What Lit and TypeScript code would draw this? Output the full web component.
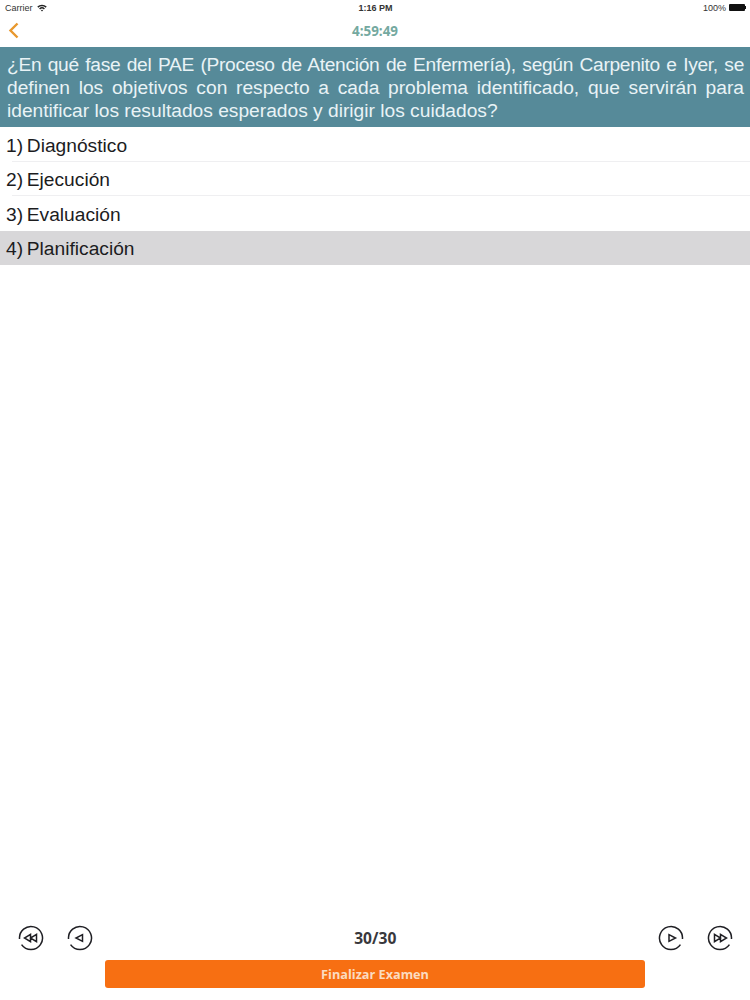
import { LitElement, html, css, svg } from "lit";
import { customElement } from "lit/decorators.js";

const ring = (gapLeft: boolean) =>
  gapLeft
    ? svg`<path d="M1.54 14 A11.5 11.5 0 1 1 3.58 19.6" />`
    : svg`<path d="M24.46 14 A11.5 11.5 0 1 0 22.42 19.6" />`;

@customElement("app-root")
export class AppRoot extends LitElement {
  static styles = css`
    :host {
      display: flex;
      flex-direction: column;
      height: 1000px;
      width: 750px;
      background: #fff;
      font-family: "Liberation Sans", Arial, sans-serif;
      color: #1c1c1e;
      overflow: hidden;
    }
    .status {
      height: 15px;
      display: grid;
      grid-template-columns: 1fr auto 1fr;
      align-items: center;
      padding: 0 4px 0 5px;
      font-size: 9px;
      color: #333;
    }
    .status .left { display: flex; align-items: center; gap: 4px; }
    .status .time { font-weight: 700; font-size: 9px; }
    .status .right { display: flex; justify-content: flex-end; align-items: center; gap: 3px; }
    .batt { display: flex; align-items: center; }
    .batt i { display: block; width: 16px; height: 7px; background: #111; border-radius: 1px; }
    .batt b { display: block; width: 1px; height: 3px; background: #111; }
    .nav {
      height: 31px;
      display: grid;
      grid-template-columns: 1fr auto 1fr;
      align-items: center;
      padding: 0 8px;
    }
    .timer {
      font-family: "Open Sans", "Noto Sans", sans-serif;
      font-weight: 700;
      font-size: 13.4px;
      color: #74a9a0;
    }
    .q {
      margin-top: 1px;
      background: #568a99;
      color: #e9f3f6;
      font-size: 19.2px;
      line-height: 23px;
      height: 80px;
      box-sizing: border-box;
      padding: 5.5px 6px 0 7px;
      text-align: justify;
    }
    .tight { letter-spacing: -0.32px; }
    .row {
      height: 34.5px;
      box-sizing: border-box;
      display: flex;
      align-items: center;
      padding: 3px 0 0 6px;
      font-size: 19.2px;
      word-spacing: -1.6px;
      color: #1c1c1e;
      position: relative;
    }
    .row.line::after {
      content: "";
      position: absolute;
      left: 12px;
      right: 0;
      bottom: 0;
      height: 1px;
      background: #efeff1;
    }
    .row.sel { background: #d8d7d9; }
    .spacer { flex: 1; }
    .pager {
      height: 26px;
      display: grid;
      grid-template-columns: 1fr auto 1fr;
      align-items: center;
      padding: 0 17.5px 0 18px;
      margin-bottom: 9px;
    }
    .group { display: flex; gap: 23px; }
    .group.end { justify-content: flex-end; }
    .count {
      font-family: "Open Sans", "Noto Sans", sans-serif;
      font-weight: 700;
      font-size: 15.6px;
      color: #38383c;
    }
    svg.ic { display: block; width: 26px; height: 26px; fill: none; stroke: #1f1f24; stroke-width: 1.5; }
    .foot { display: flex; justify-content: center; padding-bottom: 12px; }
    .finish {
      width: 540px;
      height: 28px;
      background: #f76f12;
      border-radius: 3px;
      border: 0;
      padding: 0;
      color: #fbdcc0;
      font-family: "Open Sans", "Noto Sans", sans-serif;
      font-weight: 700;
      font-size: 12.7px;
      display: flex;
      align-items: center;
      justify-content: center;
    }
  `;

  render() {
    return html`
      <div class="status">
        <div class="left">
          <span>Carrier</span>
          <svg width="10" height="8" viewBox="0 0 10 8">
            <path d="M0.3 2.6 A6.8 6.8 0 0 1 9.7 2.6 L8.7 3.7 A5.4 5.4 0 0 0 1.3 3.7 Z" fill="#222" />
            <path d="M2.1 4.4 A4.2 4.2 0 0 1 7.9 4.4 L6.9 5.4 A2.8 2.8 0 0 0 3.1 5.4 Z" fill="#222" />
            <path d="M3.9 6.2 A1.6 1.6 0 0 1 6.1 6.2 L5 7.6 Z" fill="#222" />
          </svg>
        </div>
        <div class="time">1:16 PM</div>
        <div class="right">
          <span>100%</span>
          <span class="batt"><i></i><b></b></span>
        </div>
      </div>
      <div class="nav">
        <svg width="11" height="17" viewBox="0 0 11 17" fill="none" stroke="#e8982e" stroke-width="2.4">
          <path d="M9.5 1.5 L2.5 8.5 L9.5 15.5" />
        </svg>
        <div class="timer">4:59:49</div>
        <div></div>
      </div>
      <div class="q"><span class="tight">¿En qué fase del PAE (Proceso de Atención de Enfermería), según Carpenito e Iyer, se</span> definen los objetivos con respecto a cada problema identificado, que servirán para identificar los resultados esperados y dirigir los cuidados?</div>
      <div class="row line">1) Diagnóstico</div>
      <div class="row line">2) Ejecución</div>
      <div class="row">3) Evaluación</div>
      <div class="row sel">4) Planificación</div>
      <div class="spacer"></div>
      <div class="pager">
        <div class="group">
          <svg class="ic" viewBox="0 0 26 26">
            ${ring(true)}
            <path d="M12.5 9.4 L6.5 13 L12.5 16.6 Z M18.5 9.4 L12.5 13 L18.5 16.6 Z" />
          </svg>
          <svg class="ic" viewBox="0 0 26 26">
            ${ring(true)}
            <path d="M15.5 9.7 L9 13 L15.5 16.3 Z" />
          </svg>
        </div>
        <div class="count">30/30</div>
        <div class="group end">
          <svg class="ic" viewBox="0 0 26 26">
            ${ring(false)}
            <path d="M11 9.7 L17.5 13 L11 16.3 Z" />
          </svg>
          <svg class="ic" viewBox="0 0 26 26">
            ${ring(false)}
            <path d="M7.5 9.4 L13.5 13 L7.5 16.6 Z M13.5 9.4 L19.5 13 L13.5 16.6 Z" />
          </svg>
        </div>
      </div>
      <div class="foot"><button class="finish">Finalizar Examen</button></div>
    `;
  }
}
